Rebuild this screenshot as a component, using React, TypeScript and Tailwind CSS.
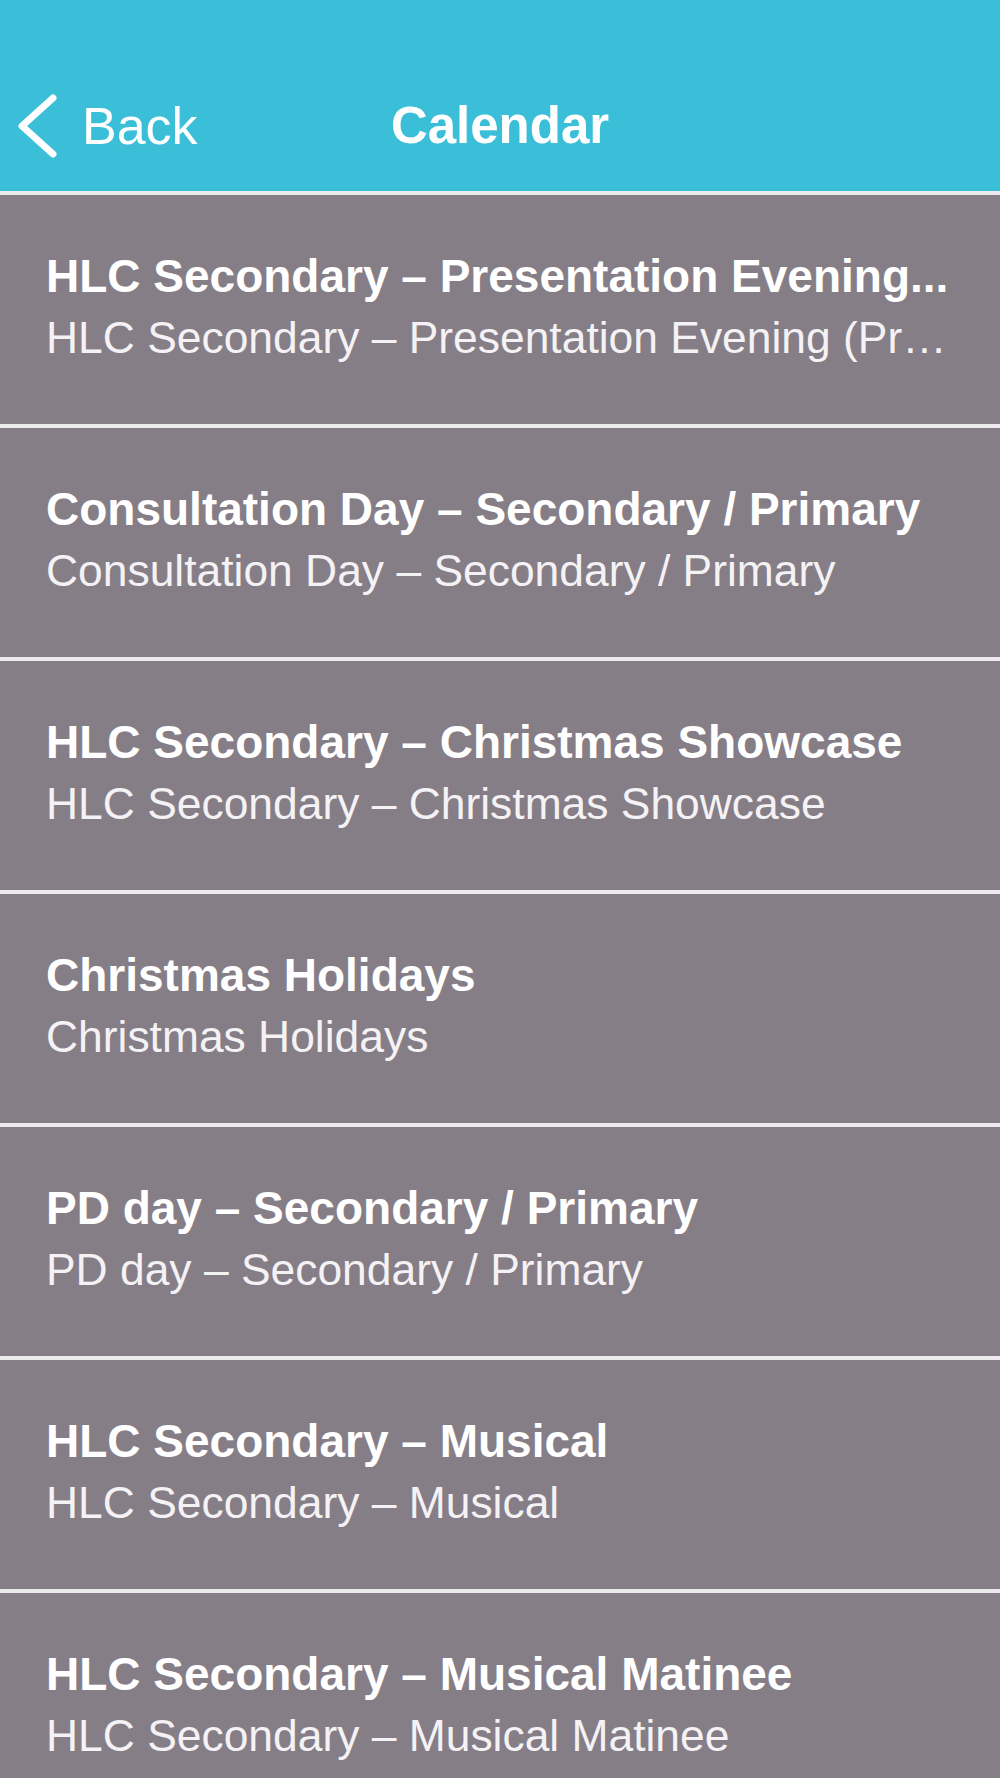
import React from "react";

const rows = [
  { t: "HLC Secondary – Presentation Evening...", s: "HLC Secondary – Presentation Evening (Pr…" },
  { t: "Consultation Day – Secondary / Primary", s: "Consultation Day – Secondary / Primary" },
  { t: "HLC Secondary – Christmas Showcase", s: "HLC Secondary – Christmas Showcase" },
  { t: "Christmas Holidays", s: "Christmas Holidays" },
  { t: "PD day – Secondary / Primary", s: "PD day – Secondary / Primary" },
  { t: "HLC Secondary – Musical", s: "HLC Secondary – Musical" },
  { t: "HLC Secondary – Musical Matinee", s: "HLC Secondary – Musical Matinee" },
];

export default function App() {
  return (
    <div
      className="w-[1000px] h-[1778px] overflow-hidden bg-[#867e87] text-white"
      style={{ fontFamily: '"Liberation Sans", Arial, sans-serif' }}
    >
      <header className="h-[195px] bg-[#3bbfd8] border-b-4 border-[#eceaec] pt-[91px]">
        <div className="grid grid-cols-[1fr_auto_1fr] items-center h-[70px]">
          <div className="flex items-center pl-[17px]">
            <svg width="44" height="70" viewBox="0 0 44 70" fill="none">
              <polyline
                points="36,7 5,35 36,63"
                stroke="white"
                strokeWidth="7"
                strokeLinecap="round"
                strokeLinejoin="round"
              />
            </svg>
            <span className="ml-[21px] text-[52px] leading-[60px]">Back</span>
          </div>
          <div className="text-[51px] leading-[60px] font-bold">Calendar</div>
          <div />
        </div>
      </header>
      {rows.map((r, i) => (
        <div key={i} className="h-[233px] border-b-4 border-[#eceaec] pl-[46px] pt-[54px]">
          <div className="text-[46px] leading-[54px] font-bold whitespace-nowrap">{r.t}</div>
          <div className="mt-[8px] text-[44.4px] leading-[54px] whitespace-nowrap text-[#f4f2f4]">{r.s}</div>
        </div>
      ))}
    </div>
  );
}
